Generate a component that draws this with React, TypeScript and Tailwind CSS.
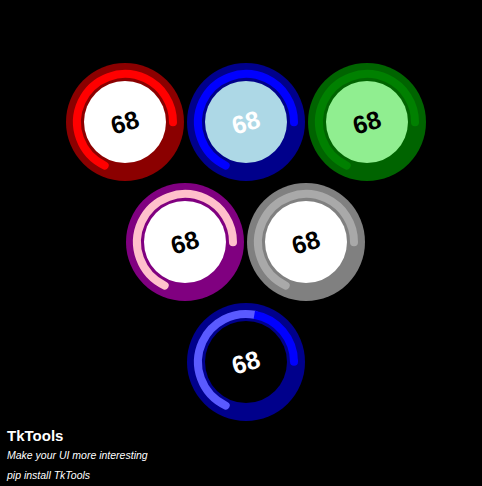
const C = 2 * Math.PI * 48

type GaugeProps = {
  ring: string
  arc: string
  inner: string
  text: string
  value?: number
  split?: { color: string; deg: number }
}

const Gauge = ({ ring, arc, inner, text, value = 68, split }: GaugeProps) => {
  const len = (C * value) / 100
  const splitLen = split ? (C * split.deg) / 360 : 0
  // end point of the arc, for the round cap when the arc is split
  const endA = ((115 + (value / 100) * 360) * Math.PI) / 180
  return (
    <div
      className="relative flex h-[118px] w-[118px] items-center justify-center rounded-full"
      style={{ background: ring }}
    >
      <svg className="absolute inset-0" width="118" height="118" viewBox="0 0 118 118">
        {split ? (
          <>
            <circle
              cx="59"
              cy="59"
              r="48"
              fill="none"
              stroke={split.color}
              strokeWidth="8"
              strokeLinecap="round"
              strokeDasharray={`${splitLen} ${C}`}
              transform="rotate(115 59 59)"
            />
            <circle
              cx="59"
              cy="59"
              r="48"
              fill="none"
              stroke={arc}
              strokeWidth="8"
              strokeDasharray={`${len - splitLen} ${C}`}
              transform={`rotate(${115 + split.deg} 59 59)`}
            />
            <circle cx={59 + 48 * Math.cos(endA)} cy={59 + 48 * Math.sin(endA)} r="4" fill={arc} />
          </>
        ) : (
          <circle
            cx="59"
            cy="59"
            r="48"
            fill="none"
            stroke={arc}
            strokeWidth="8"
            strokeLinecap="round"
            strokeDasharray={`${len} ${C}`}
            transform="rotate(115 59 59)"
          />
        )}
      </svg>
      <div
        className="relative flex h-[82px] w-[82px] items-center justify-center rounded-full"
        style={{ background: inner }}
      >
        <span
          className="-rotate-[17deg] font-['Liberation_Sans',Arial,sans-serif] text-[25px] font-bold leading-none"
          style={{ color: text }}
        >
          {value}
        </span>
      </div>
    </div>
  )
}

export default function App() {
  return (
    <div className="flex h-[486px] w-[482px] flex-col bg-black font-['Liberation_Sans',Arial,sans-serif] text-white">
      <div className="flex flex-col items-center gap-[2px] pl-[9px] pt-[63px]">
        <div className="flex gap-[3px]">
          <Gauge ring="#8b0000" arc="#ff0000" inner="#ffffff" text="#000000" />
          <Gauge ring="#00008b" arc="#0000ff" inner="#add8e6" text="#ffffff" />
          <Gauge ring="#006400" arc="#008000" inner="#90ee90" text="#000000" />
        </div>
        <div className="flex gap-[3px]">
          <Gauge ring="#800080" arc="#ffc0cb" inner="#ffffff" text="#000000" />
          <Gauge ring="#808080" arc="#a9a9a9" inner="#ffffff" text="#000000" />
        </div>
        <div className="flex">
          <Gauge
            ring="#00008b"
            arc="#0000ff"
            inner="#000000"
            text="#ffffff"
            split={{ color: "#5a5aff", deg: 165 }}
          />
        </div>
      </div>

      {/* footer */}
      <div className="mt-[6px] flex flex-col px-[7px]">
        <p className="text-[15px] font-bold leading-[18px]">TkTools</p>
        <p className="text-[10.5px] italic leading-[20px]">Make your UI more interesting</p>
        <p className="text-[10.5px] italic leading-[20px]">pip install TkTools</p>
      </div>
    </div>
  )
}
